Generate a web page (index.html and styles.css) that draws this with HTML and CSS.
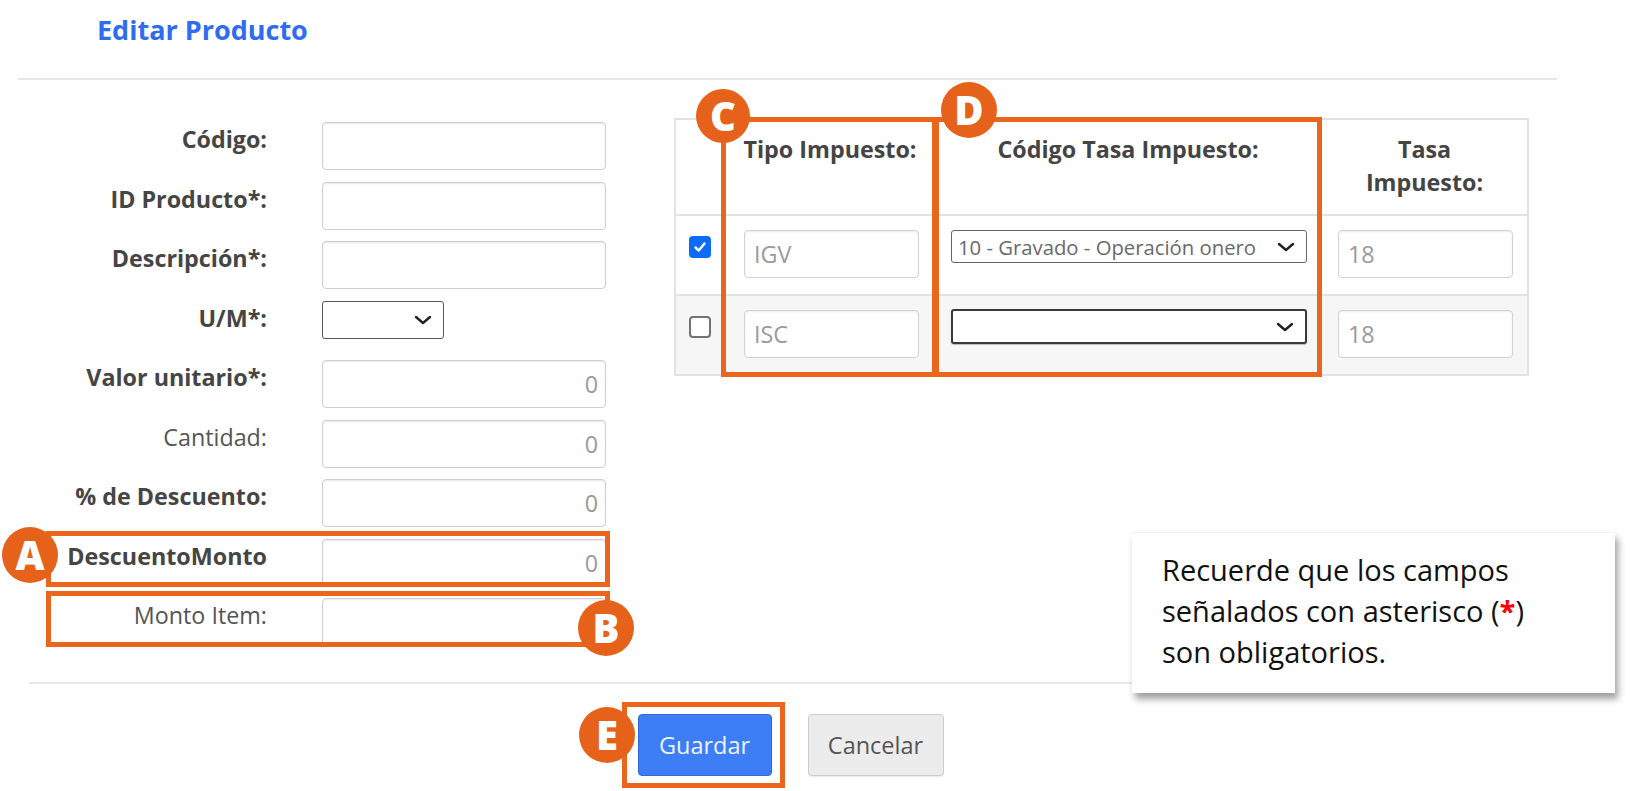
FILE: index.html
```html
<!DOCTYPE html>
<html lang="es">
<head>
<meta charset="utf-8">
<title>Editar Producto</title>
<link rel="stylesheet" href="styles.css">
</head>
<body>
<div class="modal">
  <div class="modal-header"><h4 class="title">Editar Producto</h4></div>
  <div class="modal-body">
    <div class="form">
      <div class="row"><label class="lbl">Código:</label><input class="fc" type="text" value=""></div>
      <div class="row"><label class="lbl">ID Producto*:</label><input class="fc" type="text" value=""></div>
      <div class="row"><label class="lbl">Descripción*:</label><input class="fc" type="text" value=""></div>
      <div class="row"><label class="lbl">U/M*:</label>
        <div class="um-select"><span class="sel-text"></span>
          <svg class="chev" width="18" height="10" viewBox="0 0 18 10"><path d="M2 2 L9 8 L16 2" fill="none" stroke="#222" stroke-width="2.4" stroke-linecap="round" stroke-linejoin="round"/></svg>
        </div>
      </div>
      <div class="row"><label class="lbl">Valor unitario*:</label><input class="fc" type="text" value="0" readonly></div>
      <div class="row"><label class="lbl n">Cantidad:</label><input class="fc" type="text" value="0" readonly></div>
      <div class="row"><label class="lbl">% de Descuento:</label><input class="fc" type="text" value="0" readonly></div>
      <div class="row"><label class="lbl">DescuentoMonto</label><input class="fc" type="text" value="0" readonly></div>
      <div class="row"><label class="lbl n">Monto Item:</label><input class="fc" type="text" value="" readonly></div>
    </div>
    <table class="tbl">
      <colgroup><col class="c1"><col class="c2"><col class="c3"><col class="c4"></colgroup>
      <thead>
        <tr><th></th><th>Tipo Impuesto:</th><th>Código Tasa Impuesto:</th><th>Tasa<br>Impuesto:</th></tr>
      </thead>
      <tbody>
        <tr>
          <td class="cbcell"><span class="cb on"><svg width="16" height="16" viewBox="0 0 16 16"><path d="M3.5 8.5 L6.8 11.5 L12.5 4.5" fill="none" stroke="#fff" stroke-width="2.4" stroke-linecap="round" stroke-linejoin="round"/></svg></span></td>
          <td class="pc"><input class="tc" type="text" value="IGV" readonly></td>
          <td class="sc"><div class="tsel"><span class="sel-text">10 - Gravado - Operación onero</span>
            <svg class="chev" width="18" height="10" viewBox="0 0 18 10"><path d="M2 2 L9 8 L16 2" fill="none" stroke="#222" stroke-width="2.4" stroke-linecap="round" stroke-linejoin="round"/></svg></div></td>
          <td class="pc rc"><input class="tc" type="text" value="18" readonly></td>
        </tr>
        <tr class="alt">
          <td class="cbcell"><span class="cb"></span></td>
          <td class="pc"><input class="tc" type="text" value="ISC" readonly></td>
          <td class="sc"><div class="tsel focus"><span class="sel-text"></span>
            <svg class="chev" width="18" height="10" viewBox="0 0 18 10"><path d="M2 2 L9 8 L16 2" fill="none" stroke="#222" stroke-width="2.4" stroke-linecap="round" stroke-linejoin="round"/></svg></div></td>
          <td class="pc rc"><input class="tc" type="text" value="18" readonly></td>
        </tr>
      </tbody>
    </table>
  </div>
  <div class="modal-footer">
    <button class="btn primary" type="button">Guardar</button>
    <button class="btn default" type="button">Cancelar</button>
  </div>
</div>

<div class="note">Recuerde que los campos señalados con asterisco (<span class="req">*</span>) son obligatorios.</div>

<div class="mk-box mk-a"></div>
<div class="mk-box mk-b"></div>
<div class="mk-box mk-c"></div>
<div class="mk-box mk-d"></div>
<div class="mk-box mk-e"></div>
<div class="mk-dot dot-a">A</div>
<div class="mk-dot dot-b">B</div>
<div class="mk-dot dot-c">C</div>
<div class="mk-dot dot-d">D</div>
<div class="mk-dot dot-e">E</div>
</body>
</html>
```

FILE: styles.css
```css
html, body {
  margin: 0;
  padding: 0;
}
body {
  font-family: "Open Sans", "Liberation Sans", sans-serif;
  color: #444;
  background: #fff;
  width: 1632px;
  height: 791px;
  overflow: hidden;
  position: relative;
}

.modal {
  margin-left: 18px;
  width: 1539px;
}
.modal-header {
  height: 78px;
  border-bottom: 2px solid #e7e7e7;
}
.title {
  margin: 0;
  padding: 12px 0 0 79px;
  font-size: 27px;
  line-height: 36px;
  font-weight: 700;
  color: #2f6cf0;
}

.modal-body {
  display: flex;
  align-items: flex-start;
  height: 602px;
}

.form {
  width: 588px;
  padding-top: 42px;
}
.row {
  display: flex;
  align-items: flex-start;
  height: 48px;
  margin-bottom: 11.5px;
}
.lbl {
  width: 249px;
  flex: none;
  text-align: right;
  font-size: 23.3px;
  line-height: 32px;
  padding-top: 1px;
  font-weight: 700;
  color: #454545;
  white-space: nowrap;
}
.lbl.n {
  font-weight: 400;
  color: #555;
}
.fc {
  margin: 0 0 0 55px;
  width: 284px;
  height: 48px;
  box-sizing: border-box;
  border: 1px solid #cfcfcf;
  border-radius: 4px;
  box-shadow: inset 0 1px 2px rgba(0, 0, 0, 0.09);
  padding: 0 7px;
  font-family: "Open Sans", "Liberation Sans", sans-serif;
  font-size: 23.3px;
  color: #9a9a9a;
  text-align: right;
  background: #fff;
  outline: none;
}

.um-select {
  margin-left: 55px;
  width: 122px;
  height: 38px;
  box-sizing: border-box;
  border: 1px solid #555;
  border-radius: 3px;
  background: #fff;
  display: flex;
  align-items: center;
  justify-content: flex-end;
  padding-right: 11px;
}

.chev {
  flex: none;
  display: block;
}

/* table */
.tbl {
  margin: 38px 0 0 68px;
  width: 853px;
  border-collapse: collapse;
  table-layout: fixed;
  border: 2px solid #e2e2e2;
}
.c1 { width: 50px; }
.c2 { width: 210px; }
.c3 { width: 386px; }
.c4 { width: 207px; }

.tbl th {
  border: 2px solid #e2e2e2;
  padding: 13px 8px 15px;
  font-size: 23.3px;
  line-height: 33px;
  font-weight: 700;
  color: #444;
  text-align: center;
  vertical-align: top;
}
.tbl td {
  border: 2px solid #e2e2e2;
  vertical-align: top;
  height: 48px;
  padding: 14px 15px 16px 18px;
}
.tbl td.rc {
  padding-left: 16px;
}
.tbl tr.alt td {
  background: #f6f6f6;
}
.tbl td.sc {
  padding-left: 15px;
  padding-right: 13px;
}
.tbl td.cbcell {
  padding: 20px 0 0 13px;
}

.cb {
  display: flex;
  align-items: center;
  justify-content: center;
  width: 22px;
  height: 22px;
  box-sizing: border-box;
  border: 2px solid #737373;
  border-radius: 4px;
  background: #fff;
}
.cb.on {
  border-color: #0c6cf7;
  background: #0c6cf7;
}

.tc {
  margin: 0;
  width: 175px;
  height: 48px;
  box-sizing: border-box;
  border: 1px solid #d2d2d2;
  border-radius: 4px;
  box-shadow: inset 0 1px 2px rgba(0, 0, 0, 0.08);
  padding: 0 9px;
  font-family: "Open Sans", "Liberation Sans", sans-serif;
  font-size: 23.3px;
  color: #9a9a9a;
  background: #fff;
  outline: none;
}

.tsel {
  width: 100%;
  height: 33px;
  box-sizing: border-box;
  border: 1px solid #666;
  border-radius: 3px;
  background: #fff;
  display: flex;
  align-items: center;
  padding: 0 11px 0 6px;
  gap: 8px;
  overflow: hidden;
}
.tsel .sel-text {
  flex: 1;
  min-width: 0;
  overflow: hidden;
  white-space: nowrap;
  font-size: 20.3px;
  color: #6a6a6a;
}
.tsel.focus {
  height: 35px;
  margin-top: -1px;
  border: 2px solid #3a3a3a;
  box-shadow: 0 1px 1px rgba(0, 0, 0, 0.25);
}

/* footer */
.modal-footer {
  margin: 0 11px;
  border-top: 2px solid #e7e7e7;
  padding: 30px 0 0 6px;
  display: flex;
  justify-content: center;
  gap: 36px;
}
.btn {
  height: 62px;
  box-sizing: border-box;
  border-radius: 4px;
  font-family: "Open Sans", "Liberation Sans", sans-serif;
  font-size: 23.5px;
  padding: 0;
  cursor: pointer;
}
.btn.primary {
  width: 134px;
  background: #3d7ef7;
  border: 1px solid #2e69d6;
  color: #eef3ff;
}
.btn.default {
  width: 136px;
  background: #ececec;
  border: 1px solid #cccccc;
  color: #555;
  box-shadow: 0 1px 1px rgba(0, 0, 0, 0.08);
}

/* floating note */
.note {
  position: absolute;
  left: 1132px;
  top: 532px;
  width: 483px;
  height: 161px;
  box-sizing: border-box;
  padding: 16px 50px 0 30px;
  background: #fff;
  font-size: 29px;
  line-height: 41px;
  color: #111;
  box-shadow: 3px 6px 7px rgba(0, 0, 0, 0.38);
  border-top: 1px solid #f2f2f2;
}
.req {
  color: #f00;
  font-weight: 700;
}

/* annotation markers */
.mk-box {
  position: absolute;
  box-sizing: border-box;
  border: 5.5px solid #e9661c;
}
.mk-a { left: 46px; top: 531px; width: 564px; height: 56px; }
.mk-b { left: 46px; top: 591px; width: 564px; height: 56px; }
.mk-c { left: 721px; top: 117px; width: 216px; height: 260px; }
.mk-d { left: 934px; top: 117px; width: 388px; height: 260px; }
.mk-e { left: 622px; top: 702px; width: 163px; height: 86px; }

.mk-dot {
  position: absolute;
  width: 56px;
  height: 56px;
  border-radius: 50%;
  background: #e6621a;
  color: #fff;
  font-family: "Open Sans", "Liberation Sans", sans-serif;
  font-weight: 800;
  font-size: 40px;
  line-height: 56px;
  text-align: center;
}
.dot-a { left: 2px; top: 527px; }
.dot-b { left: 578px; top: 600px; }
.dot-c { left: 696px; top: 89px; width: 54px; height: 54px; line-height: 54px; }
.dot-d { left: 941px; top: 82px; }
.dot-e { left: 579px; top: 707px; }
```
